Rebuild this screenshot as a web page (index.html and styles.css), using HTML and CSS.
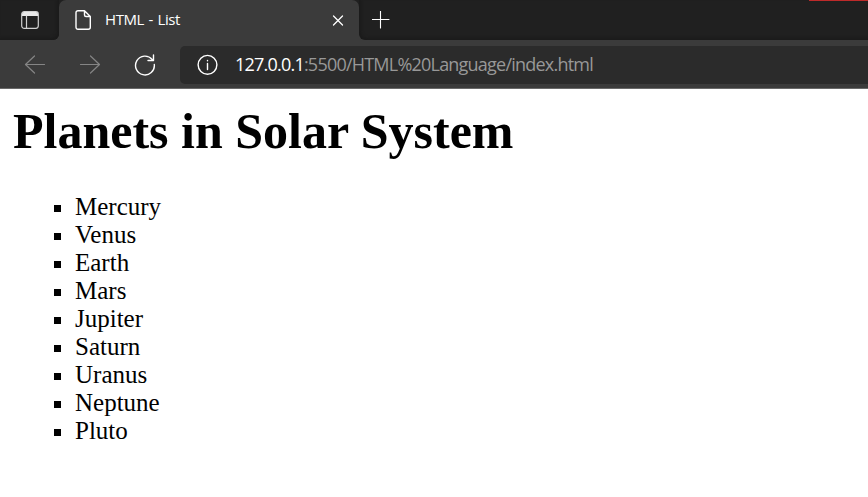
FILE: index.html
```html
<!DOCTYPE html>
<html lang="en">
<head>
<meta charset="utf-8">
<title>HTML - List</title>
<link rel="stylesheet" href="styles.css">
</head>
<body>
<header class="browser">
  <div class="tabstrip">
    <div class="workspace">
      <svg width="18" height="18" viewBox="0 0 18 18"><rect x=".7" y=".7" width="16.600" height="16.600" rx="2.500"/><path class="bar" d="M1 5V3q0-2 2-2h12q2 0 2 2v2z"/><path d="M5.500 5v12"/></svg>
    </div>
    <div class="tab">
      <svg class="page" width="16" height="20" viewBox="0 0 16 20"><path d="M3 .7h6.500L15.300 6.500V17.300a2 2 0 0 1-2 2H3a2 2 0 0 1-2-2V2.700a2 2 0 0 1 2-2zM9.500 1v4a1.500 1.500 0 0 0 1.500 1.500h4"/></svg>
      <span class="tab-title">HTML - List</span>
      <svg class="close" width="12" height="12" viewBox="0 0 12 12"><path d="M1.500 2l9 9M10.500 2l-9 9"/></svg>
    </div>
    <div class="new-tab">
      <svg class="plus" width="18" height="18" viewBox="0 0 18 18"><path d="M8.500 0v17M0 8.500h17"/></svg>
    </div>
  </div>
  <div class="toolbar">
    <svg class="nav dim" width="22" height="20" viewBox="0 0 22 20"><path d="M20.500 9.500h-19M10.500 1l-9 8.500 9 8.500"/></svg>
    <svg class="nav dim" width="22" height="20" viewBox="0 0 22 20"><path d="M1.500 9.500h19M11.500 1l9 8.500-9 8.500"/></svg>
    <svg class="nav" width="22" height="22" viewBox="0 0 22 22"><path d="M20.300 10.500a9.400 9.400 0 1 1-2.200-5.100M19.500 1v5.500H14"/></svg>
    <div class="address">
      <svg width="22" height="22" viewBox="0 0 22 22"><circle cx="11.500" cy="10.800" r="9.400"/><path d="M11.500 9.500v6M11.500 6.500v.3"/></svg>
      <span class="url"><b>127.0.0.1</b>:5500/HTML%20Language/index.html</span>
    </div>
  </div>
</header>
<main>
  <h1>Planets in Solar System</h1>
  <ul>
    <li>Mercury</li><li>Venus</li><li>Earth</li><li>Mars</li><li>Jupiter</li><li>Saturn</li><li>Uranus</li><li>Neptune</li><li>Pluto</li>
  </ul>
</main>
</body>
</html>
```
FILE: styles.css
```css
* { box-sizing: border-box; }
body { margin: 0; height: 497px; overflow: hidden; background: #fff; color: #000; font-family: "Liberation Serif", "Times New Roman", serif; }
svg { flex: none; fill: none; stroke: #fff; stroke-width: 1.4; stroke-linecap: round; stroke-linejoin: round; }
.browser { height: 89px; background: #3b3b3b; border-bottom: 1px solid #696969; font-family: "Open Sans", sans-serif; }
.tabstrip { display: flex; height: 40px; background: linear-gradient(#202020 34px, #3b3b3b 34px); }
.workspace { width: 59px; padding: 11px 0 0 21px; background: #202020; border-bottom-right-radius: 6px; box-shadow: inset -2px -2px 3px #1b1b1b; }
.workspace svg { stroke: #d0d0d0; stroke-width: 1.2; }
.workspace .bar { fill: #e8e8e8; stroke: none; }
.tab { display: flex; align-items: center; width: 300px; padding: 0 15px 0 16px; background: #3b3b3b; border-radius: 7px 7px 0 0; }
.tab-title { flex: 1; margin: -2px 0 0 14px; color: #fff; font-size: 15px; letter-spacing: -.4px; word-spacing: 1px; }
.close { stroke-width: 1.3; }
.new-tab { flex: 1; padding: 11px 0 0 13px; border-bottom-left-radius: 6px; background: linear-gradient(#c42b2b, #c42b2b) right top / 59px 1px no-repeat #202020; box-shadow: inset 2px -2px 3px #1b1b1b; }
.plus { display: block; stroke-width: 1.1; }
.toolbar { display: flex; align-items: center; height: 49px; padding-left: 24px; }
.nav { margin-right: 33px; }
.nav:nth-child(3) { margin-right: 24px; }
.dim { stroke: #858585; stroke-width: 1.2; }
.address { display: flex; align-items: center; flex: 1; height: 38px; padding-left: 16px; background: #2b2b2b; border-radius: 5px 0 0 5px; }
.url { margin: -2px 0 0 17px; color: #989898; font-size: 18px; line-height: 24px; letter-spacing: -.78px; white-space: nowrap; }
.url b { color: #fff; font-weight: 400; }
main { padding: 14px 13px; }
h1 { margin: 0; font-size: 50px; line-height: 56px; white-space: nowrap; }
ul { margin: 34px 0 0; padding-left: 62px; list-style: square; font-size: 25px; line-height: 28px; }
```
